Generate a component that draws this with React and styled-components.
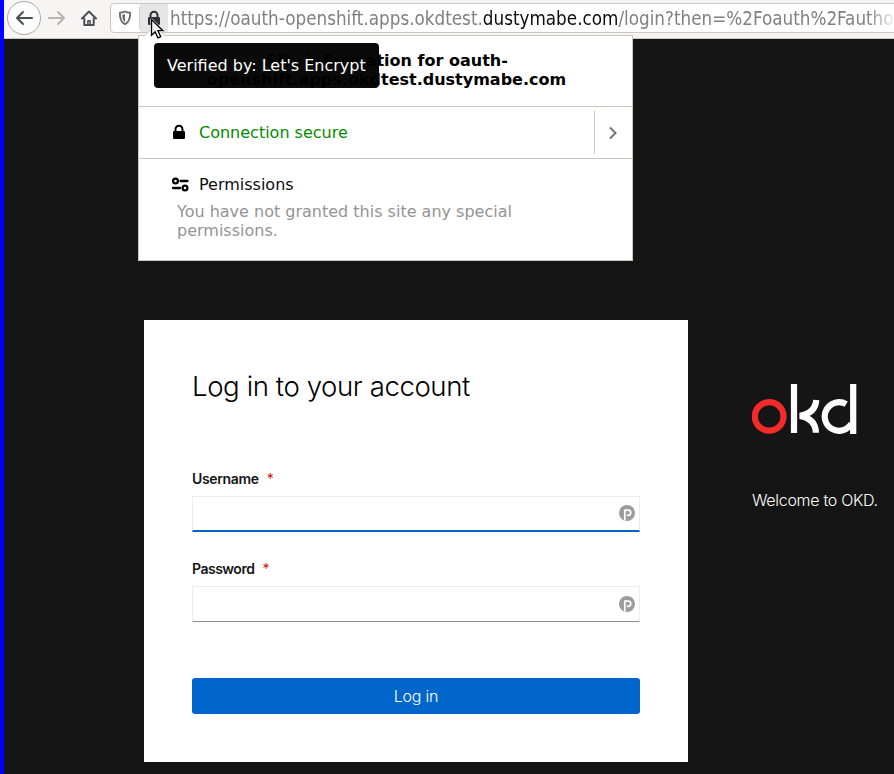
import React from "react";
import styled, { createGlobalStyle } from "styled-components";

const GlobalStyle = createGlobalStyle`
  * { box-sizing: border-box; }
  body { margin: 0; background: #151515; overflow: hidden; }
`;

const ui = `"DejaVu Sans", sans-serif`;
const web = `Inter, sans-serif`;
const line = "#cdc7c2";

const Screen = styled.div`
  position: relative;
  width: 894px;
  height: 774px;
  overflow: hidden;
  display: flex;
  flex-direction: column;
  border-left: 4px solid #0000ff;
  background: #151515;
`;

const Toolbar = styled.header`
  flex: none;
  display: flex;
  align-items: flex-start;
  height: 39px;
  padding: 1px 0 0 3px;
  background: #f6f5f4;
  border-bottom: 1px solid ${line};
`;

const NavButton = styled.span`
  display: flex;
  align-items: center;
  justify-content: center;
  flex: none;
  width: ${(p) => p.$width}px;
  height: 34px;
`;

const BackCircle = styled(NavButton)`
  border: 1px solid #aaa7a4;
  border-radius: 50%;
  background: #fcfcfc;
`;

const AddressBar = styled.div`
  flex: 1;
  min-width: 0;
  display: flex;
  height: 30px;
  margin: 2px -6px 0 5px;
  border: 1px solid ${line};
  border-radius: 4px;
  background: #fff;
  overflow: hidden;
`;

const Shield = styled.span`
  display: flex;
  align-items: center;
  justify-content: center;
  width: 28px;
`;

const Separator = styled.span`
  width: 1px;
  margin: 3px 0;
  background: #cfcfcf;
`;

const Identity = styled.span`
  display: flex;
  align-items: center;
  justify-content: center;
  width: 28px;
  background: #e6e6e6;
`;

const Url = styled.div`
  flex: 1;
  min-width: 0;
  overflow: hidden;
  padding-left: 2px;
  font: 18.69px/30px "DejaVu Sans Condensed", "DejaVu Sans", sans-serif;
  color: #808080;
  white-space: nowrap;
  mask-image: linear-gradient(to right, #000 700px, transparent 729px);

  strong {
    font-weight: 400;
    color: #0c0c0d;
  }
`;

const Page = styled.main`
  flex: 1;
  display: flex;
  align-items: flex-start;
  gap: 64px;
  padding: 281px 0 0 140px;
  font-family: ${web};
`;

const Card = styled.section`
  flex: none;
  width: 544px;
  height: 442px;
  padding: 48px;
  background: #fff;
`;

const Title = styled.h1`
  margin: 0 0 62px;
  font-size: 27.6px;
  line-height: 36px;
  font-weight: 300;
  letter-spacing: -0.42px;
  color: #000;
`;

const Field = styled.label`
  display: block;
  height: 90px;
`;

const Label = styled.span`
  display: flex;
  gap: 8px;
  height: 30px;
  font-size: 14px;
  line-height: 26px;
  font-weight: 600;
  letter-spacing: ${(p) => p.$spacing}px;
  color: #151515;
`;

const Required = styled.span`
  font-weight: 400;
  color: #c9190b;
`;

const Input = styled.span`
  display: flex;
  align-items: center;
  justify-content: flex-end;
  height: 36px;
  padding: 0 4px ${(p) => (p.$focused ? 1 : 0)}px 0;
  border: 1px solid #ededed;
  border-bottom: ${(p) => (p.$focused ? "2px solid #0066cc" : "1px solid #8a8d90")};
`;

const SubmitButton = styled.button`
  display: block;
  width: 100%;
  height: 36px;
  margin-top: 32px;
  padding: 0;
  border: 0;
  border-radius: 3px;
  background: #0066cc;
  color: #fff;
  font: 300 16px/36px ${web};
  letter-spacing: -0.2px;
`;

const Brand = styled.aside`
  display: flex;
  flex-direction: column;
  gap: 53px;
  padding-top: 63px;
`;

const Welcome = styled.p`
  margin: 0;
  font-size: 16px;
  line-height: 24px;
  font-weight: 300;
  letter-spacing: -0.3px;
  white-space: nowrap;
  color: #fff;
`;

const Popup = styled.section`
  position: absolute;
  left: 134px;
  top: 35px;
  width: 495px;
  height: 226px;
  border: 1px solid ${line};
  background: #fff;
  font: 16px/19px ${ui};
  color: #0c0c0d;
`;

const Arrow = styled.svg`
  position: absolute;
  left: 5px;
  top: -10px;
`;

const PopupHeader = styled.h2`
  height: 71px;
  margin: 0;
  padding: 15px 59px 0 61px;
  border-bottom: 1px solid ${line};
  font: bold 16px/19px ${ui};
  text-align: center;
  color: #000;
`;

const SecurityRow = styled.div`
  display: flex;
  align-items: center;
  height: 52px;
  padding-left: 31px;
  border-bottom: 1px solid ${line};
`;

const IconSlot = styled.span`
  display: flex;
  align-items: center;
  justify-content: center;
  width: 20px;
  margin-right: 9px;
`;

const LockSlot = styled(IconSlot)`
  width: 18px;
  height: 18px;
  align-items: flex-start;
  margin-right: 11px;
`;

const Secure = styled.span`
  flex: 1;
  color: #058b00;
`;

const More = styled.span`
  display: flex;
  align-items: center;
  justify-content: center;
  width: 38px;
  height: 43px;
  padding-right: 2px;
  border-left: 1px solid ${line};
`;

const PermissionsTitle = styled.div`
  display: flex;
  align-items: center;
  height: 19px;
  margin: 16px 0 8px;
  padding-left: 31px;
`;

const PermissionsNote = styled.p`
  margin: 0;
  padding: 0 100px 0 38px;
  color: #949494;
`;

const Tooltip = styled.div`
  position: absolute;
  left: 150px;
  top: 43px;
  width: 225px;
  height: 45px;
  padding-left: 13px;
  border-radius: 4px;
  background: rgba(0, 0, 0, 0.96);
  color: #fff;
  font: 16px/45px ${ui};
  white-space: nowrap;
`;

const Cursor = styled.svg`
  position: absolute;
  left: 146px;
  top: 18px;
`;

function Lock({ color }) {
  return (
    <svg width="14" height="16" viewBox="0 0 14 16">
      <path d="M3.5 8V5.2a3.5 3.5 0 0 1 7 0V8" fill="none" stroke={color} strokeWidth="2" />
      <rect x="1" y="7" width="12" height="8" rx="1.2" fill={color} />
    </svg>
  );
}

function PasswordBadge() {
  return (
    <svg width="16" height="16" viewBox="0 0 16 16">
      <circle cx="8" cy="8" r="8" fill="#9c9c9c" />
      <path d="M5.8 4.500V15.600M5.800 5.200H9.200a2.500 2.500 0 0 1 0 5.100H7.800" fill="none" stroke="#fff" strokeWidth="1.700" />
    </svg>
  );
}

function OkdLogo() {
  return (
    <svg width="105" height="52" viewBox="752 383 105 52" fill="none" stroke="#fff" strokeWidth="6.2">
      <circle cx="769.2" cy="416.4" r="14.3" stroke="#f32a2a" />
      <path d="M794 384V433M853.2 384V434" />
      <path d="M816.2 400c-.4 8-5 13.700-16.200 15.900 11.200 2.200 15.800 8.100 15.900 16.900" />
      <path d="M846.2 404.100A14.300 14.300 0 1 0 851.500 423.500" />
    </svg>
  );
}

export default function App() {
  return (
    <>
      <GlobalStyle />
      <Screen>
        <Toolbar>
          <BackCircle $width={34}>
            <svg width="18" height="16" viewBox="0 0 18 16" fill="none" stroke="#4a4f52" strokeWidth="2" strokeLinecap="round" strokeLinejoin="round">
              <path d="M17 8H2M8 2 2 8l6 6" />
            </svg>
          </BackCircle>
          <NavButton $width={32}>
            <svg width="18" height="16" viewBox="0 0 18 16" fill="none" stroke="#b4b4b3" strokeWidth="2" strokeLinecap="round" strokeLinejoin="round">
              <path d="M1 8h15M10 2l6 6-6 6" />
            </svg>
          </NavButton>
          <NavButton $width={32}>
            <svg width="16" height="16" viewBox="0 0 16 16" fill="none" stroke="#4a4f52" strokeWidth="2" strokeLinecap="round" strokeLinejoin="round">
              <path d="M1 8.500 8 1.500l7 7M3.300 8.500V15H12.700V8.500" />
              <path d="M6.900 15v-4.200h2.200V15" strokeWidth="1.500" />
            </svg>
          </NavButton>
          <AddressBar>
            <Shield>
              <svg width="14" height="16" viewBox="0 0 14 16">
                <path d="M7 1.500c1.600.9 3.300 1.200 5.100 1.200.2 5.400-.8 9.300-5.100 11.600C2.700 12 1.700 8.100 1.900 2.700 3.700 2.700 5.400 2.400 7 1.500z" fill="none" stroke="#68686a" strokeWidth="1.800" strokeLinejoin="round" />
                <path d="M7 4v8C4.800 10.500 4.300 8.200 4.300 4.800 5.300 4.700 6.200 4.400 7 4z" fill="#68686a" />
              </svg>
            </Shield>
            <Separator />
            <Identity>
              <Lock color="#303032" />
            </Identity>
            <Url>
              https://oauth-openshift.apps.okdtest.<strong>dustymabe.com</strong>/login?then=%2Foauth%2Fauthorize
            </Url>
          </AddressBar>
        </Toolbar>
        <Page>
          <Card>
            <Title>Log in to your account</Title>
            <Field>
              <Label $spacing={-0.35}>
                Username <Required>*</Required>
              </Label>
              <Input $focused>
                <PasswordBadge />
              </Input>
            </Field>
            <Field>
              <Label $spacing={-0.5}>
                Password <Required>*</Required>
              </Label>
              <Input>
                <PasswordBadge />
              </Input>
            </Field>
            <SubmitButton>Log in</SubmitButton>
          </Card>
          <Brand>
            <OkdLogo />
            <Welcome>Welcome to OKD.</Welcome>
          </Brand>
        </Page>
        <Popup>
          <Arrow width="22" height="11" viewBox="0 0 22 11">
            <path d="M0 10.500 10.500 0 21 10.500V11H0z" fill="#fff" />
            <path d="M0 10 10.500 0 21 10" fill="none" stroke={line} />
          </Arrow>
          <PopupHeader>
            Site information for oauth-
            <br />
            openshift.apps.okdtest.dustymabe.com
          </PopupHeader>
          <SecurityRow>
            <LockSlot>
              <Lock color="#000" />
            </LockSlot>
            <Secure>Connection secure</Secure>
            <More>
              <svg width="8" height="14" viewBox="0 0 8 14" fill="none" stroke="#737373" strokeWidth="2">
                <path d="m1 1.500 5.500 5.500L1 12.500" />
              </svg>
            </More>
          </SecurityRow>
          <PermissionsTitle>
            <IconSlot>
              <svg width="18" height="15" viewBox="0 0 18 15" fill="none" stroke="#000" strokeWidth="2.300">
                <circle cx="4.500" cy="4" r="2.400" />
                <circle cx="14" cy="11" r="2.400" />
                <path d="M9.500 4h7M2 11h7" strokeLinecap="round" />
              </svg>
            </IconSlot>
            Permissions
          </PermissionsTitle>
          <PermissionsNote>You have not granted this site any special permissions.</PermissionsNote>
        </Popup>
        <Tooltip>Verified by: Let's Encrypt</Tooltip>
        <Cursor width="18" height="24" viewBox="0 0 18 24">
          <path d="M1.500 1.500v15.700l3.600-3.300 2.800 6 2.900-1.300-2.800-5.900h4.900z" fill="none" stroke="#fff" strokeWidth="2.400" strokeLinejoin="round" />
          <path d="M1.500 1.500v15.700l3.600-3.300 2.800 6 2.900-1.300-2.800-5.900h4.900z" fill="#f2f2f2" stroke="#000" strokeWidth="1.300" />
        </Cursor>
      </Screen>
    </>
  );
}
